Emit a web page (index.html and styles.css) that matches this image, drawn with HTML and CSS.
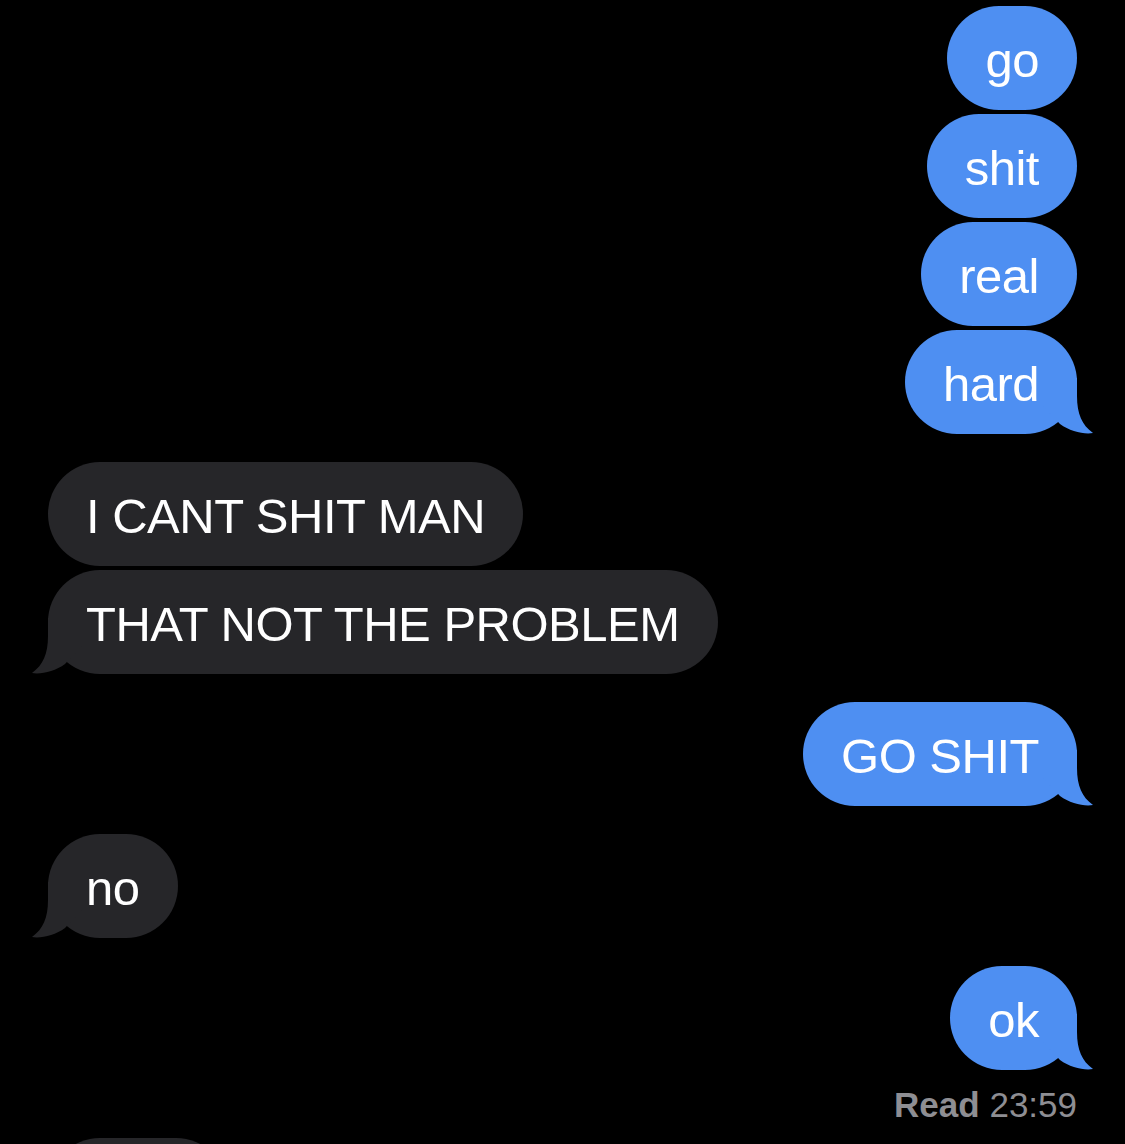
FILE: index.html
```html
<!DOCTYPE html>
<html lang="en">
<head>
<meta charset="utf-8">
<title>Messages</title>
<link rel="stylesheet" href="styles.css">
</head>
<body>
<main class="thread">
  <div class="group sent">
    <div class="bubble">go</div>
    <div class="bubble">shit</div>
    <div class="bubble">real</div>
    <div class="bubble tail">hard<svg class="tail-shape" viewBox="0 0 50 56" width="50" height="56"><path d="M0 0H34V18C34 36 39 47 50 55C41 56.5 27 53.5 17 46L0 28Z"/></svg></div>
  </div>
  <div class="group received">
    <div class="bubble">I CANT SHIT MAN</div>
    <div class="bubble tail">THAT NOT THE PROBLEM<svg class="tail-shape" viewBox="0 0 50 56" width="50" height="56"><path d="M0 0H34V18C34 36 39 47 50 55C41 56.5 27 53.5 17 46L0 28Z"/></svg></div>
  </div>
  <div class="group sent">
    <div class="bubble tail">GO SHIT<svg class="tail-shape" viewBox="0 0 50 56" width="50" height="56"><path d="M0 0H34V18C34 36 39 47 50 55C41 56.5 27 53.5 17 46L0 28Z"/></svg></div>
  </div>
  <div class="group received">
    <div class="bubble tail">no<svg class="tail-shape" viewBox="0 0 50 56" width="50" height="56"><path d="M0 0H34V18C34 36 39 47 50 55C41 56.5 27 53.5 17 46L0 28Z"/></svg></div>
  </div>
  <div class="group sent">
    <div class="bubble tail">ok<svg class="tail-shape" viewBox="0 0 50 56" width="50" height="56"><path d="M0 0H34V18C34 36 39 47 50 55C41 56.5 27 53.5 17 46L0 28Z"/></svg></div>
  </div>
  <div class="receipt"><b>Read</b> 23:59</div>
  <div class="group received last">
    <div class="bubble partial"></div>
  </div>
</main>
</body>
</html>
```

FILE: styles.css
```css
html, body {
  margin: 0;
  padding: 0;
  background: #000;
  height: 100%;
  overflow: hidden;
}

.thread {
  display: flex;
  flex-direction: column;
  padding: 6px 48px 0 48px;
  font-family: "Liberation Sans", Arial, sans-serif;
}

.group {
  display: flex;
  flex-direction: column;
  gap: 4px;
}

.group + .group {
  margin-top: 28px;
}

.sent {
  align-items: flex-end;
}

.received {
  align-items: flex-start;
}

.bubble {
  position: relative;
  box-sizing: border-box;
  height: 104px;
  padding: 4px 38px 0 38px;
  border-radius: 52px;
  display: flex;
  align-items: center;
  font-size: 49px;
  line-height: 1;
  letter-spacing: -0.5px;
  color: #fff;
  white-space: nowrap;
}

.sent .bubble {
  background: #4e8ff2;
}

.received .bubble {
  background: #262629;
}

.tail-shape {
  position: absolute;
  bottom: 0;
  display: block;
}

.sent .tail-shape {
  right: -16px;
  fill: #4e8ff2;
}

.received .tail-shape {
  left: -16px;
  fill: #262629;
  transform: scaleX(-1);
}

.receipt {
  margin-top: 17px;
  align-self: flex-end;
  font-size: 35px;
  line-height: 1;
  color: #8e8e93;
}

.receipt b {
  font-weight: 700;
}

.group.last {
  margin-top: 16px;
}

.bubble.partial {
  width: 180px;
}
```
